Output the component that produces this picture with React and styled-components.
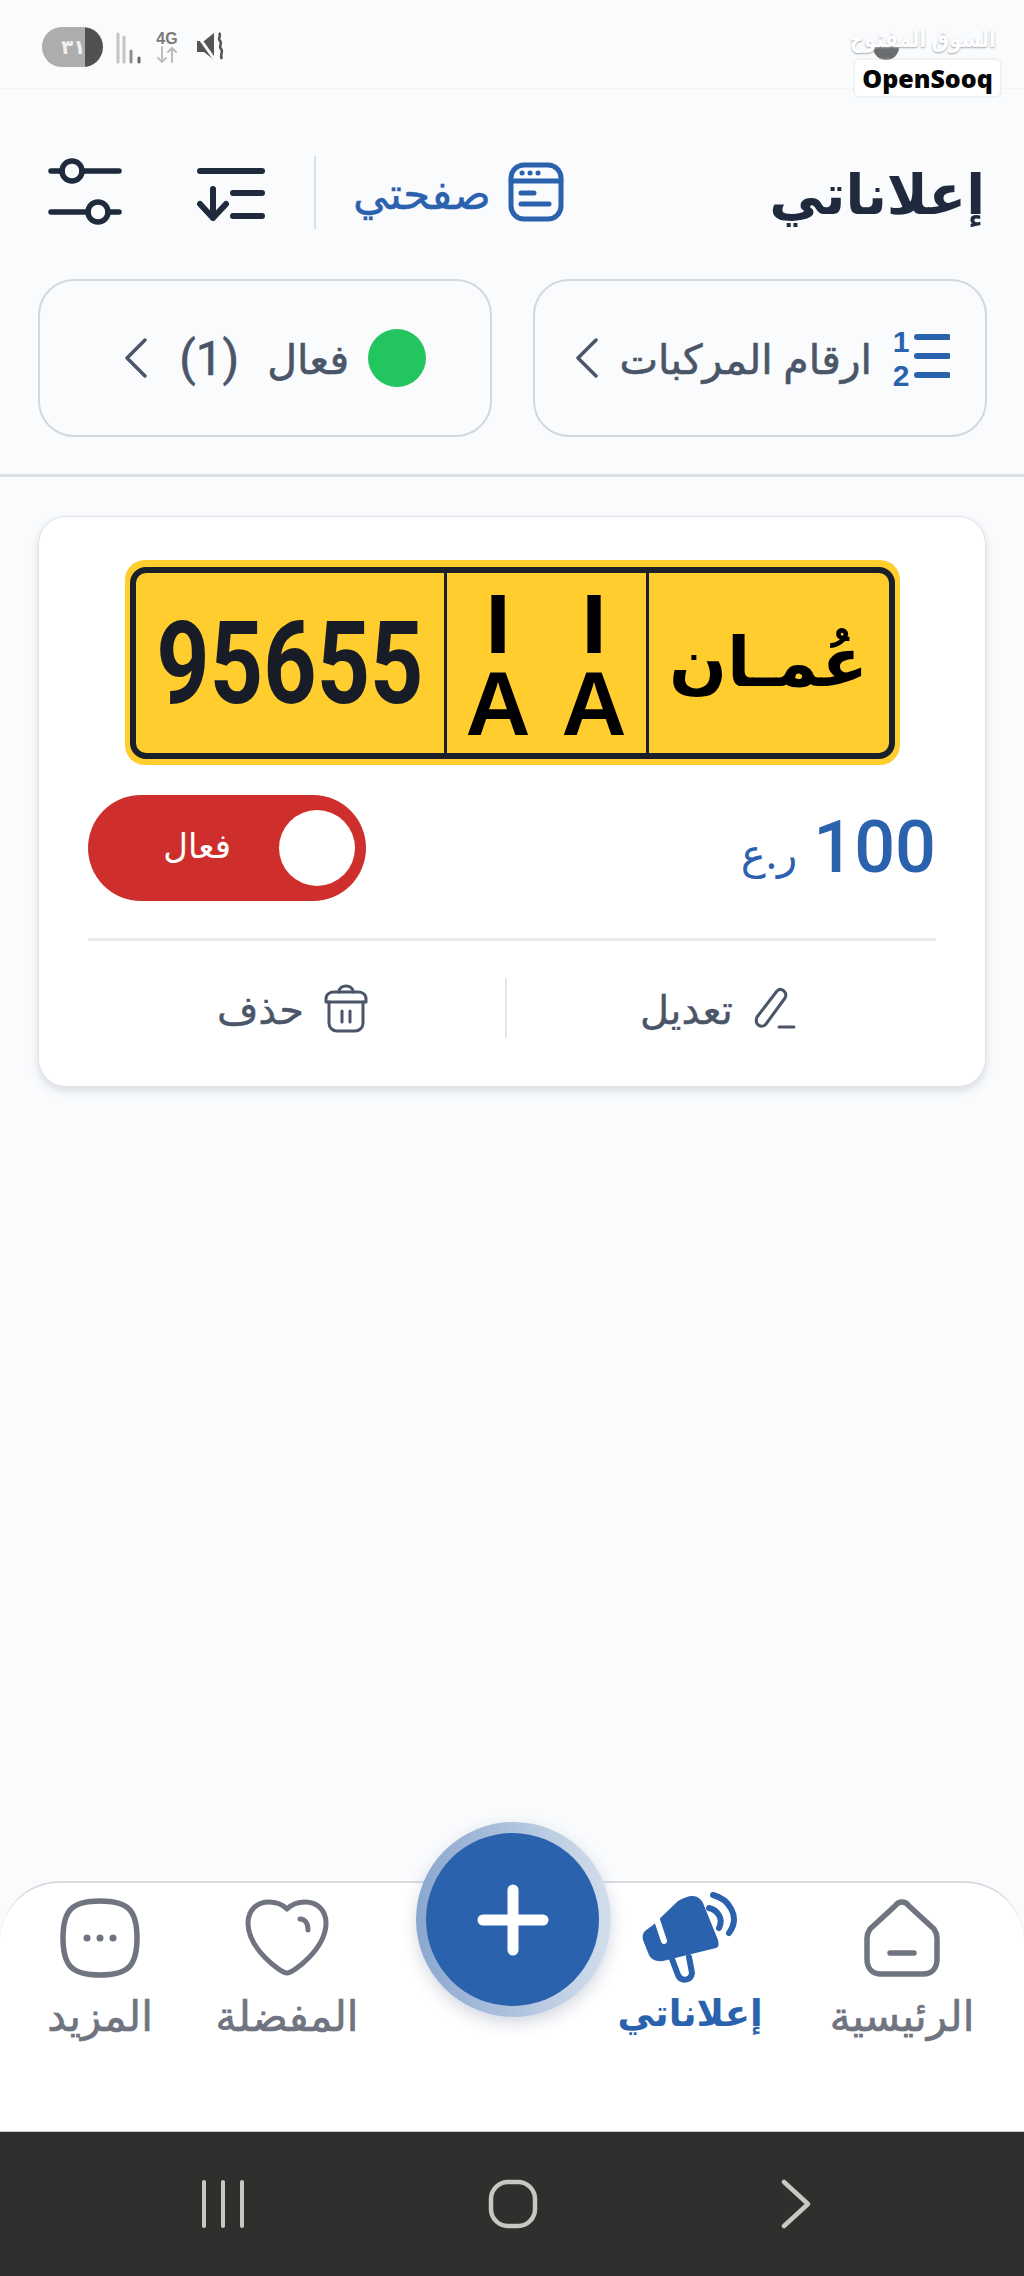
import React from "react";
import styled, { createGlobalStyle } from "styled-components";

const GlobalStyle = createGlobalStyle`
  html, body { margin: 0; padding: 0; background: #f9fbfd; }
  * { box-sizing: border-box; }
`;

const arabic = `"Noto Sans", "DejaVu Sans", sans-serif`;
const blue = "#2b62ad";
const slate = "#4a5568";
const gray = "#6f7480";

const Page = styled.div`
  width: 1024px;
  height: 2276px;
  position: relative;
  display: flex;
  flex-direction: column;
  overflow: hidden;
  background: #f9fbfd;
  font-family: ${arabic};
  direction: rtl;
`;

// status bar
const StatusBar = styled.div`
  height: 89px;
  flex: none;
  position: relative;
  direction: ltr;
  display: flex;
  align-items: flex-start;
  gap: 13px;
  padding: 27px 0 0 42px;
  border-bottom: 1px solid #f3f5f7;
`;
const Battery = styled.div`
  width: 61px;
  height: 40px;
  border-radius: 20px;
  overflow: hidden;
  background: linear-gradient(90deg, #adadad 0 70%, #505050 70% 100%);
  color: #f0f0f0;
  font-size: 20px;
  font-weight: 700;
  line-height: 40px;
  padding-left: 19px;
`;
const FourG = styled.div`
  width: 24px;
  margin-top: 4px;
  color: #7a7a7a;
  font: 700 16px/15px "Liberation Sans", sans-serif;
  text-align: center;
  svg { display: block; }
`;
const MuteIcon = styled.svg`
  margin: 4px 0 0 3px;
`;
const Logo = styled.div`
  position: absolute;
  top: 22px;
  right: 24px;
  width: 145px;
  display: flex;
  flex-direction: column;
`;
const LogoArabic = styled.div`
  height: 38px;
  color: #fff;
  font-size: 23px;
  font-weight: 700;
  line-height: 32px;
  white-space: nowrap;
  text-align: center;
  text-shadow: 0 1px 2px #a2a6ac;
  transform: translateX(6px) scaleX(0.86);
  direction: rtl;
`;
const LogoBox = styled.div`
  height: 36px;
  background: #fff;
  border-radius: 4px;
  box-shadow: 0 0 3px #d5d8dc;
  color: #050505;
  font: 800 25px/36px "Open Sans", sans-serif;
  text-align: center;
`;
const HiddenIcon = styled.div`
  position: absolute;
  top: 45px;
  left: 873px;
  width: 26px;
  height: 15px;
  background: #6a6d70;
  border-radius: 0 0 13px 13px;
`;

// header
const Header = styled.header`
  height: 190px;
  flex: none;
  display: flex;
  align-items: center;
  justify-content: space-between;
  padding: 16px 39px 0 48px;
`;
const Title = styled.h1`
  margin: 0;
  color: #1f2a3c;
  font-size: 55px;
  font-weight: 700;
`;
const HeaderTools = styled.div`
  display: flex;
  align-items: center;
`;
const MyPage = styled.div`
  display: flex;
  align-items: center;
  gap: 17px;
  color: ${blue};
  font-size: 44px;
  font-weight: 400;
  -webkit-text-stroke: 0.4px currentColor;
`;
const ToolDivider = styled.div`
  width: 2px;
  height: 73px;
  background: #dcdfe3;
  margin: 0 37px 0 49px;
`;
const SortSlot = styled.div`
  display: flex;
  margin-top: 3px;
`;
const FilterSlot = styled.div`
  margin-right: 75px;
  display: flex;
`;

// chips
const ChipRow = styled.div`
  flex: none;
  display: grid;
  grid-template-columns: 454px 454px;
  gap: 41px;
  padding: 0 37px 0 38px;
  height: 198px;
  border-bottom: 3px solid #dcdfe3;
`;
const Chip = styled.div`
  height: 158px;
  border: 2px solid #d4d7db;
  border-radius: 36px;
  display: flex;
  align-items: center;
  gap: ${(p) => p.$gap}px;
  padding: 0 ${(p) => p.$inset}px;
  color: ${slate};
  font-size: 41px;
  font-weight: 400;
  white-space: nowrap;
  -webkit-text-stroke: 0.6px currentColor;
`;
const GreenDot = styled.div`
  width: 58px;
  height: 58px;
  border-radius: 50%;
  background: #22c55e;
`;
const Count = styled.span`
  font-family: "Roboto", sans-serif;
  font-size: 48px;
  margin: 0 9px 0 12px;
  direction: ltr;
`;

// card
const List = styled.main`
  flex: 1;
  padding: 39px 38px 0 38px;
`;
const Card = styled.article`
  height: 571px;
  background: #fff;
  border: 1px solid #dfe2e6;
  border-radius: 28px;
  box-shadow: 0 4px 8px rgba(90, 100, 115, 0.2);
  padding: 43px 49px 0;
  display: flex;
  flex-direction: column;
`;
const PlateOuter = styled.div`
  width: 775px;
  height: 205px;
  margin: 0 auto;
  flex: none;
  align-self: center;
  padding: 7px 5px 6px;
  background: #ffce2e;
  border-radius: 20px;
  direction: ltr;
`;
const PlateInner = styled.div`
  height: 100%;
  border: 6px solid #1a2029;
  border-radius: 16px;
  display: grid;
  grid-template-columns: 308px 202px 1fr;
  overflow: hidden;
`;
const PlateCell = styled.div`
  display: flex;
  align-items: center;
  justify-content: center;
  color: #171c26;
  border-left: ${(p) => p.$line ? "3px solid #1a2029" : "0"};
`;
const PlateNumber = styled.span`
  font: 700 115px/1 "Roboto", sans-serif;
  display: inline-block;
  transform: scaleX(0.81);
`;
const PlateLetter = styled.div`
  width: 96px;
  display: flex;
  flex-direction: column;
  align-items: center;
`;
const LetterAr = styled.span`
  height: 82px;
  font: 700 76px/82px "DejaVu Sans", sans-serif;
  color: #000;
`;
const LetterEn = styled.span`
  font: 700 90px/72px "Liberation Sans", sans-serif;
  color: #000;
`;
const Governorate = styled.span`
  font: 700 68px/1 "DejaVu Sans", sans-serif;
  color: #000;
  direction: rtl;
`;
const PriceRow = styled.div`
  display: flex;
  align-items: center;
  justify-content: space-between;
  margin-top: 30px;
  height: 106px;
  flex: none;
`;
const Price = styled.div`
  display: flex;
  align-items: center;
  gap: 16px;
  color: ${blue};
  font-size: 42px;
`;
const PriceValue = styled.span`
  font: 500 72px/1 "Roboto", sans-serif;
`;
const PriceUnit = styled.span`
  margin-top: 8px;
`;
const Toggle = styled.div`
  width: 278px;
  height: 106px;
  border-radius: 53px;
  background: #cf2f2c;
  color: #fff;
  display: flex;
  align-items: center;
  gap: 48px;
  padding: 0 11px;
  font-size: 34px;
`;
const Knob = styled.div`
  width: 76px;
  height: 76px;
  border-radius: 50%;
  background: #fff;
`;
const ToggleLabel = styled.span`
  margin-top: -6px;
`;
const CardDivider = styled.div`
  height: 3px;
  background: #e9ebee;
  margin-top: 37px;
  flex: none;
`;
const Actions = styled.div`
  display: grid;
  grid-template-columns: 429px 2px 419px;
  align-items: center;
  margin-top: 37px;
  height: 60px;
`;
const ActionDivider = styled.div`
  height: 60px;
  background: #e5e7ea;
`;
const Action = styled.div`
  display: flex;
  align-items: center;
  justify-content: center;
  gap: 20px;
  padding-right: 6px;
  color: ${slate};
  font-size: 40px;
  font-weight: 400;
  -webkit-text-stroke: 0.4px currentColor;
`;

// bottom nav
const BottomNav = styled.nav`
  height: 250px;
  flex: none;
  background: #fff;
  border-top: 2px solid #d8dbdf;
  border-radius: 60px 60px 0 0;
  display: grid;
  grid-template-columns: 244px 180px 176px 274px 100px;
  padding: 7px 0 0 50px;
`;
const NavItem = styled.div`
  display: flex;
  flex-direction: column;
  align-items: center;
  color: ${(p) => p.$active ? blue : gray};
  font-size: ${(p) => p.$active ? 37 : 42}px;
  font-weight: ${(p) => p.$active ? 700 : 400};
  white-space: nowrap;
  -webkit-text-stroke: ${(p) => p.$active ? 0 : 0.7}px currentColor;
`;
const NavIcon = styled.div`
  height: 96px;
  display: flex;
  align-items: center;
  justify-content: center;
`;
const FabRing = styled.div`
  position: absolute;
  left: 416px;
  top: 1822px;
  width: 195px;
  height: 195px;
  padding: 11px 12px 11px 10px;
  border-radius: 50%;
  background: linear-gradient(90deg, #8ba7cf, #d3deec);
  box-shadow: 0 6px 16px rgba(40, 60, 100, 0.2);
`;
const FabButton = styled.div`
  width: 100%;
  height: 100%;
  border-radius: 50%;
  background: ${blue};
  display: flex;
  align-items: center;
  justify-content: center;
`;

// android nav
const SystemNav = styled.div`
  height: 145px;
  flex: none;
  background: #2e302d;
  border-top: 1px solid #c9cbc9;
  direction: ltr;
  display: grid;
  grid-template-columns: 44px 50px 30px;
  column-gap: 243px;
  align-items: center;
  padding-left: 201px;
`;

const Stroke = ({ w, h, children, color = "#1f2a3c", sw = 6 }) => (
  <svg width={w} height={h} viewBox={`0 0 ${w} ${h}`} fill="none" stroke={color} strokeWidth={sw} strokeLinecap="round" strokeLinejoin="round">
    {children}
  </svg>
);

const Chevron = () => (
  <Stroke w={24} h={40} color={slate} sw={3.5}>
    <path d="M21 2 L3 20 L21 38" />
  </Stroke>
);

export default function App() {
  return (
    <Page>
      <GlobalStyle />
      <StatusBar>
        <Battery>٣١</Battery>
        <svg width="26" height="40" viewBox="0 0 26 40" fill="none" strokeWidth="3" strokeLinecap="round">
          <path d="M2 7v28M8 10v25" stroke="#c4c4c4" />
          <path d="M15 24v11" stroke="#8f8f8f" />
          <path d="M23 31v4" stroke="#666" />
        </svg>
        <FourG>
          4G
          <Stroke w={24} h={18} color="#bdbdbd" sw={2}>
            <path d="M7 1v15M3 12l4 4 4-4M17 16V2M13 6l4-4 4 4" />
          </Stroke>
        </FourG>
        <MuteIcon width="32" height="32" viewBox="0 0 32 32">
          <path d="M2 10h7l10 -8v27l-10-8H2z" fill="#555" />
          <path d="M1 2l19 27" stroke="#f9fbfd" strokeWidth="3" />
          <path d="M24 2c3 3-2 5 1 8s-2 5 1 8-2 6 1 10" stroke="#555" strokeWidth="2.5" fill="none" />
        </MuteIcon>
        <HiddenIcon />
        <Logo>
          <LogoArabic>السوق المفتوح</LogoArabic>
          <LogoBox>OpenSooq</LogoBox>
        </Logo>
      </StatusBar>

      <Header>
        <Title>إعلاناتي</Title>
        <HeaderTools>
          <MyPage>
            <Stroke w={56} h={60} color={blue} sw={5}>
              <rect x="3" y="3" width="50" height="54" rx="13" />
              <path d="M3 19h50M13 31h13M13 42h28" />
              <path d="M14 11h.1M22 11h.1M30 11h.1" />
            </Stroke>
            <span>صفحتي</span>
          </MyPage>
          <ToolDivider />
          <SortSlot>
            <Stroke w={68} h={54}>
              <path d="M3 4h62M36 26h29M36 49h29" />
              <path d="M16 22v29M3 37l13 14 13-14" />
            </Stroke>
          </SortSlot>
          <FilterSlot>
            <Stroke w={74} h={68} sw={5.5}>
              <circle cx="24" cy="13" r="10" />
              <circle cx="50" cy="54" r="10" />
              <path d="M3 13h11M34 13h37M3 54h37M60 54h11" />
            </Stroke>
          </FilterSlot>
        </HeaderTools>
      </Header>

      <ChipRow>
        <Chip $gap={20} $inset={35}>
          <svg width="58" height="72" viewBox="0 -8 58 72">
            <text x="9" y="22" fill={blue} fontFamily="Liberation Sans" fontWeight="700" fontSize="30" textAnchor="middle">1</text>
            <text x="9" y="56" fill={blue} fontFamily="Liberation Sans" fontWeight="700" fontSize="30" textAnchor="middle">2</text>
            <path d="M25 7h31M25 26h31M25 45h31" stroke={blue} strokeWidth="6" strokeLinecap="round" />
          </svg>
          <span>ارقام المركبات</span>
          <Chevron />
        </Chip>
        <Chip $gap={19} $inset={64}>
          <GreenDot />
          <span>فعال</span>
          <Count>(1)</Count>
          <Chevron />
        </Chip>
      </ChipRow>

      <List>
        <Card>
          <PlateOuter>
            <PlateInner>
              <PlateCell>
                <PlateNumber>95655</PlateNumber>
              </PlateCell>
              <PlateCell $line>
                <PlateLetter>
                  <LetterAr>ا</LetterAr>
                  <LetterEn>A</LetterEn>
                </PlateLetter>
                <PlateLetter>
                  <LetterAr>ا</LetterAr>
                  <LetterEn>A</LetterEn>
                </PlateLetter>
              </PlateCell>
              <PlateCell $line>
                <Governorate>عُمـان</Governorate>
              </PlateCell>
            </PlateInner>
          </PlateOuter>

          <PriceRow>
            <Price>
              <PriceValue>100</PriceValue>
              <PriceUnit>ر.ع</PriceUnit>
            </Price>
            <Toggle>
              <Knob />
              <ToggleLabel>فعال</ToggleLabel>
            </Toggle>
          </PriceRow>
          <CardDivider />

          <Actions>
            <Action>
              <svg width="44" height="44" viewBox="0 0 44 44" fill="none" stroke={slate} strokeWidth="3" strokeLinecap="round" strokeLinejoin="round">
                <path d="M4 31 L24 5 C28 1 35 6 32 12 L13 38 C9 43 1 39 4 31Z" />
                <path d="M26 41h15" />
              </svg>
              <span>تعديل</span>
            </Action>
            <ActionDivider />
            <Action>
              <svg width="44" height="50" viewBox="0 0 44 50" fill="none" stroke={slate} strokeWidth="3" strokeLinecap="round" strokeLinejoin="round">
                <path d="M2 16 C2 11 6 9 10 9 H34 C38 9 42 11 42 16 V19 H2Z" />
                <path d="M15 9 C15 1 29 1 29 9" />
                <path d="M5 19 V40 C5 45 9 48 13 48 H31 C35 48 39 45 39 40 V19" />
                <path d="M18 28v11M26 28v11" />
              </svg>
              <span>حذف</span>
            </Action>
          </Actions>
        </Card>
      </List>

      <BottomNav>
        <NavItem>
          <NavIcon>
            <Stroke w={76} h={78} color={gray} sw={5.5}>
              <path d="M38 3 C41 3 43 4 45 7 L70 30 C72 33 73 36 73 39 V60 C73 69 68 75 59 75 H17 C8 75 3 69 3 60 V39 C3 36 4 33 6 30 L31 7 C33 4 35 3 38 3Z" />
              <path d="M26 54h24" />
            </Stroke>
          </NavIcon>
          <span>الرئيسية</span>
        </NavItem>
        <NavItem $active>
          <NavIcon>
            <svg width="98" height="94" viewBox="0 0 98 94" fill="none">
              <path d="M37 10 C42 7 47 5 52 5 C56 5 60 8 62 12 L77 49 C78 53 78 56 75 57 L22 70 C15 71 10 68 8 64 L2 49 C1 45 2 42 4 40 L12 34Z" fill={blue} />
              <path d="M16 29 L23 50" stroke="#fff" strokeWidth="6" strokeLinecap="round" />
              <path d="M31 68 L37 84 C40 91 50 90 51 82 L48 66" stroke={blue} strokeWidth="6" strokeLinecap="round" />
              <path d="M68 17 C76 19 83 27 78 37" stroke={blue} strokeWidth="6" strokeLinecap="round" />
              <path d="M72 4 C88 8 100 26 88 42" stroke={blue} strokeWidth="6" strokeLinecap="round" />
            </svg>
          </NavIcon>
          <span>إعلاناتي</span>
        </NavItem>
        <div />
        <NavItem>
          <NavIcon>
            <Stroke w={84} h={78} color={gray} sw={5}>
              <path d="M42 74 C36 74 3 50 3 24 C3 11 12 3 24 3 C31 3 37 5 42 10 C47 5 53 3 60 3 C72 3 81 11 81 24 C81 50 48 74 42 74Z" />
              <path d="M55 20 C60 20 63 24 63 31" />
            </Stroke>
          </NavIcon>
          <span>المفضلة</span>
        </NavItem>
        <NavItem>
          <NavIcon>
            <svg width="80" height="80" viewBox="0 0 80 80" fill="none">
              <path d="M40 3 C68 3 77 12 77 40 C77 68 68 77 40 77 C12 77 3 68 3 40 C3 12 12 3 40 3Z" stroke={gray} strokeWidth="5.5" />
              <circle cx="27" cy="40" r="3.5" fill={gray} />
              <circle cx="40" cy="40" r="3.5" fill={gray} />
              <circle cx="53" cy="40" r="3.5" fill={gray} />
            </svg>
          </NavIcon>
          <span>المزيد</span>
        </NavItem>
      </BottomNav>

      <FabRing>
        <FabButton>
          <Stroke w={72} h={72} color="#fff" sw={11}>
            <path d="M36 6v60M6 36h60" />
          </Stroke>
        </FabButton>
      </FabRing>

      <SystemNav>
        <Stroke w={44} h={48} color="#c6c8c4" sw={4}>
          <path d="M3 2v44M22 2v44M41 2v44" />
        </Stroke>
        <svg width="50" height="50" viewBox="0 0 50 50" fill="none">
          <rect x="3" y="3" width="44" height="44" rx="17" stroke="#c6c8c4" strokeWidth="4.5" />
        </svg>
        <Stroke w={30} h={50} color="#c6c8c4" sw={4.5}>
          <path d="M3 3 L27 25 L3 47" />
        </Stroke>
      </SystemNav>
    </Page>
  );
}
